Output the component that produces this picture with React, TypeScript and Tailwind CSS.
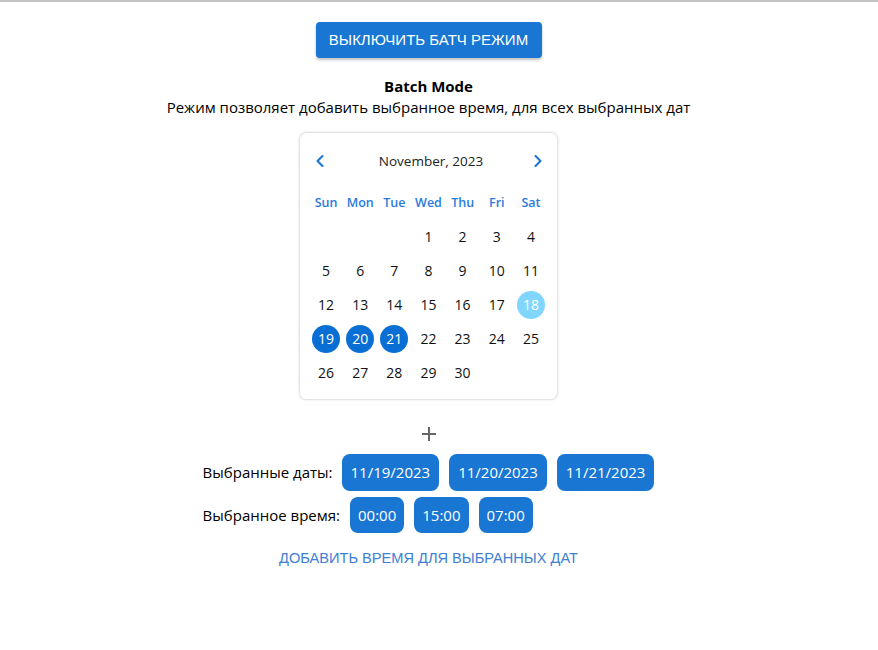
import { ChevronLeft, ChevronRight } from "lucide-react";

const dayNames = ["Sun", "Mon", "Tue", "Wed", "Thu", "Fri", "Sat"];
const selected = [19, 20, 21];
const today = 18;

function Calendar() {
  // November 2023 starts on Wednesday
  const cells: (number | null)[] = [null, null, null];
  for (let d = 1; d <= 30; d++) cells.push(d);

  return (
    <div className="w-[257px] rounded-md bg-white p-[9px] shadow-[0_0_3px_rgba(0,0,0,0.3)]">
      <div className="mb-[6px] flex h-[38px] items-center justify-between pl-[1px] text-[#1976d2]">
        <ChevronLeft size={20} strokeWidth={2.5} />
        <span className="ml-[4px] text-[13.5px] text-[#222]">November, 2023</span>
        <ChevronRight size={20} strokeWidth={2.5} />
      </div>
      <div className="grid grid-cols-7">
        {dayNames.map((d) => (
          <div key={d} className="flex h-[34px] items-center justify-center text-[12.5px] font-semibold text-[#2a7be0]">
            {d}
          </div>
        ))}
        {cells.map((d, i) => (
          <div key={i} className="flex h-[34px] items-center justify-center">
            {d && (
              <span
                className={
                  selected.includes(d)
                    ? "flex h-7 w-7 items-center justify-center rounded-full bg-[#0a6fd4] pb-[2px] text-[14px] text-white"
                    : d === today
                    ? "flex h-7 w-7 items-center justify-center rounded-full bg-[#80d6ff] pb-[2px] text-[14px] text-white"
                    : "flex h-7 w-7 items-center justify-center pb-[2px] text-[14px] text-[#111]"
                }
              >
                {d}
              </span>
            )}
          </div>
        ))}
      </div>
    </div>
  );
}

function Chip({ children, small }: { children: string; small?: boolean }) {
  return (
    <span
      className={
        small
          ? "flex items-center justify-center rounded-lg bg-[#1976d2] px-[8px] text-[15px] text-white"
          : "flex items-center justify-center rounded-lg bg-[#1976d2] px-[9px] text-[15px] text-white"
      }
    >
      {children}
    </span>
  );
}

export default function App() {
  return (
    <div className="min-h-[650px] border-t-2 border-[#c4c4c4] bg-white font-['Open_Sans',sans-serif] text-black">
      <div className="flex w-[857px] flex-col items-center">
        <button className="mt-[20px] h-[36px] w-[226px] rounded bg-[#1976d2] font-['Liberation_Sans',sans-serif] text-[15px] uppercase text-white shadow-[0_2px_3px_rgba(0,0,0,0.25)]">
          Выключить батч режим
        </button>

        <div className="mt-[18px] text-[15px] font-bold leading-[20px]">Batch Mode</div>
        <div className="text-[15px] leading-[22px]">
          Режим позволяет добавить выбранное время, для всех выбранных дат
        </div>

        <div className="mt-[15px]">
          <Calendar />
        </div>

        <svg width="16" height="16" viewBox="0 0 16 16" className="mt-[27px]">
          <path d="M8 1v14M1 8h14" stroke="#666" strokeWidth="2" />
        </svg>

        <div className="mt-[12px] flex flex-col items-start gap-[6px]">
          <div className="flex h-[37px] items-stretch gap-[10px]">
            <span className="mr-[-1px] self-center text-[15px]">Выбранные даты:</span>
            <Chip>11/19/2023</Chip>
            <Chip>11/20/2023</Chip>
            <Chip>11/21/2023</Chip>
          </div>
          <div className="flex h-[36px] items-stretch gap-[10px]">
            <span className="self-center text-[15px]">Выбранное время:</span>
            <Chip small>00:00</Chip>
            <Chip small>15:00</Chip>
            <Chip small>07:00</Chip>
          </div>
        </div>

        <button className="mt-[15px] font-['Liberation_Sans',sans-serif] text-[14.6px] uppercase text-[#3f80d2]">
          Добавить время для выбранных дат
        </button>
      </div>
    </div>
  );
}
